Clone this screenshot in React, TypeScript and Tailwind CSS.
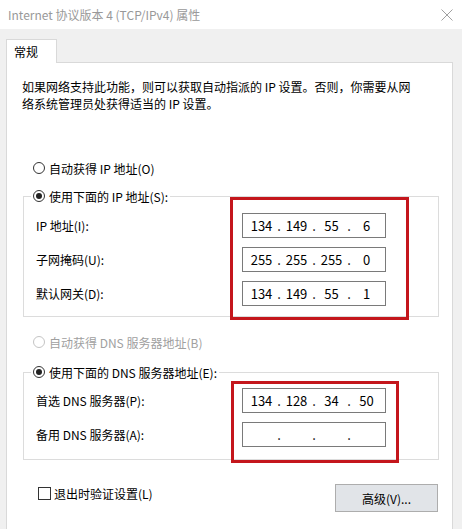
const font = "font-['Noto_Sans_CJK_SC','Noto_Sans',sans-serif]";

function Radio({ checked, disabled }: { checked?: boolean; disabled?: boolean }) {
  return (
    <span
      className={`flex h-[12px] w-[12px] shrink-0 items-center justify-center rounded-full border bg-white ${
        disabled ? "border-[#c4c4c4]" : "border-[#333333]"
      }`}
    >
      {checked && <span className="h-[6px] w-[6px] rounded-full bg-[#222222]" />}
    </span>
  );
}

function IpField({ parts }: { parts: string[] }) {
  return (
    <div className="flex h-[25px] w-[144px] items-center border border-[#7a7a7a] bg-white pl-[5px] text-[13px] text-black">
      {parts.map((p, i) => (
        <div key={i} className="flex items-center">
          <span className="w-[27px] text-center">{p}</span>
          {i < 3 && <span className="w-[8px] text-center">.</span>}
        </div>
      ))}
    </div>
  );
}

function Row({ label, parts }: { label: string; parts: string[] }) {
  return (
    <div className="flex h-[25px] items-center">
      <span className="w-[206px] text-[12px] text-black">{label}</span>
      <IpField parts={parts} />
    </div>
  );
}

export default function App() {
  return (
    <div className={`relative h-[529px] w-[462px] overflow-hidden bg-[#f0f0f0] leading-[17px] ${font}`}>
      {/* title bar */}
      <div className="flex h-[29px] items-center justify-between bg-white pl-[8px] pr-[9px]">
        <span className="text-[12px] text-[#999999]">Internet 协议版本 4 (TCP/IPv4) 属性</span>
        <svg width="12" height="12" viewBox="0 0 12 12" className="mt-[1px]">
          <path d="M0.5 0.5 L11.5 11.5 M11.5 0.5 L0.5 11.5" stroke="#a0a0a0" strokeWidth="1" />
        </svg>
      </div>

      <div className="pl-[6px] pr-[9px] pt-[10px]">
        {/* tab */}
        <div className="relative z-10 -mb-px flex h-[24px] w-[51px] items-center border border-b-0 border-[#d9d9d9] bg-white pl-[7px] text-[12px] text-black">
          常规
        </div>

        {/* panel */}
        <div className="h-[480px] border border-[#d9d9d9] bg-white">
          <p className="pl-[15px] pt-[15px] text-[12px] text-black">
            如果网络支持此功能，则可以获取自动指派的 IP 设置。否则，你需要从网
            <br />
            络系统管理员处获得适当的 IP 设置。
          </p>

          <div className="ml-[26px] mt-[46px] flex h-[20px] items-center gap-[4px] text-[12px] text-black">
            <Radio />
            <span>自动获得 IP 地址(O)</span>
          </div>

          <fieldset className="ml-[16px] mt-[8px] w-[416px] border border-[#dcdcdc] pb-[10px] pl-[12px]">
            <legend className="-ml-[5px] flex h-[20px] items-center gap-[4px] px-[2px] text-[12px] text-black">
              <Radio checked />
              <span>使用下面的 IP 地址(S):</span>
            </legend>
            <div className="flex flex-col gap-[9px] pt-[7px]">
              <Row label="IP 地址(I):" parts={["134", "149", "55", "6"]} />
              <Row label="子网掩码(U):" parts={["255", "255", "255", "0"]} />
              <Row label="默认网关(D):" parts={["134", "149", "55", "1"]} />
            </div>
          </fieldset>

          <div className="ml-[26px] mt-[15px] flex h-[20px] items-center gap-[4px] text-[12px] text-[#a0a0a0]">
            <Radio disabled />
            <span>自动获得 DNS 服务器地址(B)</span>
          </div>

          <fieldset className="ml-[16px] mt-[10px] w-[416px] border border-[#dcdcdc] pb-[12px] pl-[12px]">
            <legend className="-ml-[5px] flex h-[20px] items-center gap-[4px] px-[2px] text-[12px] text-black">
              <Radio checked />
              <span>使用下面的 DNS 服务器地址(E):</span>
            </legend>
            <div className="flex flex-col gap-[9px] pt-[6px]">
              <Row label="首选 DNS 服务器(P):" parts={["134", "128", "34", "50"]} />
              <Row label="备用 DNS 服务器(A):" parts={["", "", "", ""]} />
            </div>
          </fieldset>

          <div className="ml-[31px] mr-[14px] mt-[23px] flex items-start justify-between">
            <div className="flex h-[20px] items-center gap-[3px] text-[12px] text-black">
              <span className="h-[13px] w-[13px] border border-[#333333] bg-white" />
              <span>退出时验证设置(L)</span>
            </div>
            <button
              type="button"
              className="mt-[1px] h-[28px] w-[103px] border border-[#adadad] bg-[#e1e4e8] text-[12px] text-black"
            >
              高级(V)...
            </button>
          </div>
        </div>
      </div>

      {/* red annotation boxes */}
      <div className="pointer-events-none absolute left-[230px] top-[197px] h-[123px] w-[179px] border-[3px] border-[#c4161c]" />
      <div className="pointer-events-none absolute left-[231px] top-[381px] h-[82px] w-[168px] border-[3px] border-[#c4161c]" />
    </div>
  );
}
